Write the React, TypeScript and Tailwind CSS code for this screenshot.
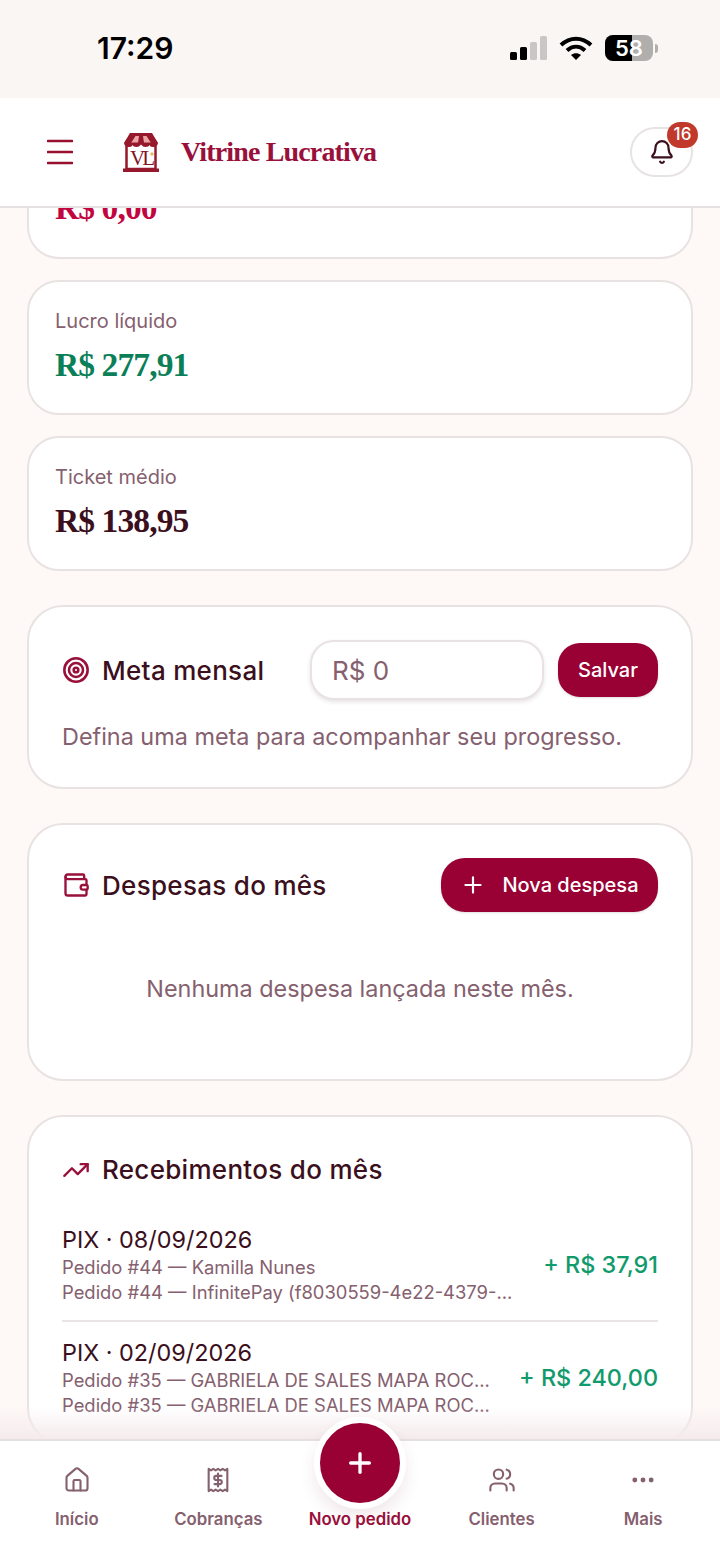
import { Bell, Ellipsis, House, Plus, Target, TrendingUp, Users, Wallet } from "lucide-react";

const serif = "font-['Liberation_Serif',serif]";

function StatusBar() {
  return (
    <div className="flex h-[98px] shrink-0 items-start justify-between bg-[#faf6f3] pl-[97px] pr-[62px] pt-[28px]">
      <span className="text-[30px] leading-[40px] font-semibold text-black">17:29</span>
      <div className="flex items-center gap-[12px] pt-[7px]">
        <svg width="38" height="26" viewBox="0 0 38 26">
          <rect x="1" y="17" width="7" height="8" rx="1.5" fill="#000" />
          <rect x="11" y="12" width="7" height="13" rx="1.5" fill="#000" />
          <rect x="21" y="7" width="7" height="18" rx="1.5" fill="#c9c7c5" />
          <rect x="31" y="1" width="7" height="24" rx="1.5" fill="#c9c7c5" />
        </svg>
        <svg width="34" height="26" viewBox="0 0 34 26" fill="none" stroke="#000" strokeWidth="4" strokeLinecap="butt">
          <path d="M2 10c9-8.500 21-8.500 30 0" />
          <path d="M8 15.500c5.500-5 12.500-5 18 0" />
          <path d="M17 25l-5-5c3-2.500 7-2.500 10 0z" fill="#000" stroke="none" />
        </svg>
        <div className="flex items-center gap-[2px]">
          <div className="relative flex h-[26px] w-[48px] items-center justify-center overflow-hidden rounded-[8px] bg-[#b0afae]">
            <div className="absolute inset-y-0 left-0 w-[27px] bg-black" />
            <span className="relative text-[22px] leading-none font-semibold text-white">58</span>
          </div>
          <div className="h-[9px] w-[3px] rounded-r-full bg-[#b0afae]" />
        </div>
      </div>
    </div>
  );
}

function Logo() {
  return (
    <svg width="36" height="40" viewBox="0 0 36 40">
      <rect x="3.500" y="10" width="29" height="27" fill="#fff" stroke="#96182c" strokeWidth="2.500" />
      <path d="M7 1h22l6 10H1z" fill="#96182c" />
      <path d="M12.500 4h3.500l-1 7H8zM20 4h3.500l4.500 7h-7z" fill="#eba5a5" />
      <path d="M1 10.500h34c0 3-2.500 4.500-5 4.500s-3-1-3.500-2c-.5 1-2 2-4 2s-3-.8-4.500-2.500C16.500 14.200 15.500 15 13.500 15s-3.500-1-4-2c-.5 1-1 2-3.500 2S1 13.500 1 10.500z" fill="#96182c" />
      <text x="18" y="33" textAnchor="middle" fontFamily="Liberation Serif" fontSize="21" letterSpacing="-3" fill="#7f1426">VL</text>
      <path d="M29 19.500l.8 1.700 1.700.8-1.700.8-.8 1.700-.8-1.700-1.700-.8 1.700-.8z" fill="#e0b050" />
      <rect x="0" y="36.500" width="36" height="3.500" fill="#96182c" />
    </svg>
  );
}

function Header() {
  return (
    <header className="flex h-[110px] shrink-0 items-center border-b-2 border-[#e6e1e1] bg-white pl-[47px] pr-[27px]">
      <svg width="26" height="26" viewBox="0 0 26 26" stroke="#99102f" strokeWidth="2.600" strokeLinecap="round">
        <path d="M1 2h24M1 13h24M1 24h24" />
      </svg>
      <div className="ml-[50px] flex items-center gap-[22px]">
        <Logo />
        <span className={`${serif} text-[28px] font-bold tracking-[-0.850px] text-[#99103b]`}>Vitrine Lucrativa</span>
      </div>
      <button className="relative ml-auto flex h-[50px] w-[63px] items-center justify-center rounded-full border-2 border-[#e8e3e3] bg-white">
        <Bell size={26} strokeWidth={2} className="text-[#3b0f1c]" />
        <span className="absolute -right-[7px] -top-[7px] flex h-[26px] w-[31px] items-center justify-center rounded-full bg-[#c0392b] text-[17px] font-medium text-white">16</span>
      </button>
    </header>
  );
}

function StatCard({ label, value, color }: { label: string; value: string; color: string }) {
  return (
    <section className="h-[135px] rounded-[32px] border-2 border-[#e8e3e2] bg-white px-[26px] pt-[25px]">
      <p className="text-[20px] leading-[28px] text-[#85606e]">{label}</p>
      <p className={`${serif} mt-[8px] text-[33.500px] leading-[44px] font-bold tracking-[-0.900px] ${color}`}>{value}</p>
    </section>
  );
}

function NavItem({ label, icon, active }: { label: string; icon?: React.ReactNode; active?: boolean }) {
  return (
    <div className={`flex flex-col items-center text-[16.800px] font-semibold ${active ? "text-[#99103b]" : "text-[#85606e]"}`}>
      <div className="flex h-[30px] items-center justify-center">{icon}</div>
      <span className="mt-[11px] leading-[26px]">{label}</span>
    </div>
  );
}

function Payment({ date, line1, line2, amount }: { date: string; line1: string; line2: string; amount: string }) {
  return (
    <div className="flex items-center justify-between">
      <div>
        <p className="text-[23.400px] leading-[32px] text-[#3b0f1c]">{date}</p>
        <p className="-mt-[1px] text-[18.400px] leading-[25px] text-[#85606e]">{line1}</p>
        <p className="text-[18.400px] leading-[25px] text-[#85606e]">{line2}</p>
      </div>
      <span className="text-[23.400px] font-medium text-[#119b6c]">{amount}</span>
    </div>
  );
}

export default function App() {
  return (
    <div className="relative flex h-[1562px] w-[720px] flex-col overflow-hidden bg-[#fef8f7] font-['Inter',sans-serif]">
      <StatusBar />
      <Header />

      <main className="relative min-h-0 flex-1 overflow-hidden">
        <div className="-mt-[62px] flex flex-col px-[27px]">
          <section className="h-[113px] rounded-[32px] border-2 border-[#e8e3e2] bg-white px-[26px] pt-[38px]">
            <p className={`${serif} text-[33.500px] leading-[44px] font-bold tracking-[-0.900px] text-[#c2053f]`}>R$ 0,00</p>
          </section>

          <div className="mt-[21px] flex flex-col gap-[21px]">
            <StatCard label="Lucro líquido" value="R$ 277,91" color="text-[#0b7f58]" />
            <StatCard label="Ticket médio" value="R$ 138,95" color="text-[#3b0f1c]" />
          </div>

          {/* Meta mensal */}
          <section className="mt-[34px] h-[184px] rounded-[36px] border-2 border-[#e8e3e2] bg-white px-[33px] pt-[33px]">
            <div className="flex items-center">
              <Target size={28} strokeWidth={2.200} className="text-[#99103b]" />
              <h2 className="ml-[12px] text-[26px] font-medium tracking-[0.3px] text-[#3b0f1c]">Meta mensal</h2>
              <div className="ml-auto flex h-[60px] w-[234px] items-center rounded-[24px] border-2 border-[#e8e3e2] bg-white px-[20px] text-[26px] text-[#85606e] shadow-[0_2px_4px_rgba(60,20,30,0.12)]">
                R$ 0
              </div>
              <button className="ml-[14px] h-[54px] w-[100px] rounded-[22px] bg-[#990033] text-[20px] font-medium text-white shadow-sm">Salvar</button>
            </div>
            <p className="mt-[20px] text-[23.400px] leading-[34px] text-[#85606e]">Defina uma meta para acompanhar seu progresso.</p>
          </section>

          {/* Despesas */}
          <section className="mt-[34px] h-[258px] rounded-[36px] border-2 border-[#e8e3e2] bg-white px-[33px] pt-[33px]">
            <div className="flex items-center">
              <Wallet size={28} strokeWidth={2} className="text-[#99103b]" />
              <h2 className="ml-[12px] text-[26px] font-medium tracking-[0.3px] text-[#3b0f1c]">Despesas do mês</h2>
              <button className="ml-auto flex h-[54px] w-[217px] items-center justify-center gap-[16px] rounded-[24px] bg-[#990033] text-[20px] font-medium text-white shadow-sm">
                <Plus size={26} strokeWidth={2} />
                Nova despesa
              </button>
            </div>
            <p className="mt-[60px] text-center text-[23.400px] leading-[34px] text-[#85606e]">Nenhuma despesa lançada neste mês.</p>
          </section>

          {/* Recebimentos */}
          <section className="mt-[34px] rounded-[36px] border-2 border-[#e8e3e2] bg-white px-[33px] pb-[24px] pt-[33px]">
            <div className="flex items-center">
              <TrendingUp size={28} strokeWidth={2} className="text-[#99103b]" />
              <h2 className="ml-[12px] text-[26px] leading-[40px] font-medium tracking-[0.3px] text-[#3b0f1c]">Recebimentos do mês</h2>
            </div>
            <div className="mt-[34px]">
              <Payment date="PIX · 08/09/2026" line1="Pedido #44 — Kamilla Nunes" line2="Pedido #44 — InfinitePay (f8030559-4e22-4379-..." amount="+ R$ 37,91" />
              <div className="my-[15px] h-[2px] bg-[#ebe4e5]" />
              <Payment date="PIX · 02/09/2026" line1="Pedido #35 — GABRIELA DE SALES MAPA ROC..." line2="Pedido #35 — GABRIELA DE SALES MAPA ROC..." amount="+ R$ 240,00" />
            </div>
          </section>
        </div>
        <div className="absolute inset-x-0 bottom-0 h-[32px] bg-gradient-to-b from-transparent to-[#f5ebed]" />
      </main>

      <nav className="relative grid h-[123px] shrink-0 grid-cols-5 border-t-2 border-[#e6e1e1] bg-white px-[6px] pt-[24px]">
        <NavItem label="Início" icon={<House size={28} strokeWidth={1.800} />} />
        <NavItem
          label="Cobranças"
          icon={
            <svg width="28" height="28" viewBox="0 0 24 24" fill="none" stroke="currentColor" strokeWidth="1.800" strokeLinejoin="round" strokeLinecap="round">
              <path d="M4 2.500l2 1.200 2-1.200 2 1.200 2-1.200 2 1.200 2-1.200 2 1.200 2-1.200v19l-2-1.200-2 1.200-2-1.200-2 1.200-2-1.200-2 1.200-2-1.200-2 1.200z" />
              <path d="M15 8.500h-4.500a1.750 1.750 0 0 0 0 3.500h3a1.750 1.750 0 0 1 0 3.500H9M12 6.500v11" />
            </svg>
          }
        />
        <NavItem label="Novo pedido" active />
        <NavItem label="Clientes" icon={<Users size={28} strokeWidth={1.800} />} />
        <NavItem label="Mais" icon={<Ellipsis size={28} strokeWidth={2.200} />} />
        <button className="absolute left-1/2 -top-[24px] flex h-[92px] w-[92px] -translate-x-1/2 items-center justify-center rounded-full border-[6px] border-white bg-[#990033] text-white shadow-[0_8px_16px_rgba(120,20,50,0.10)]">
          <Plus size={32} strokeWidth={2.500} />
        </button>
      </nav>
    </div>
  );
}
